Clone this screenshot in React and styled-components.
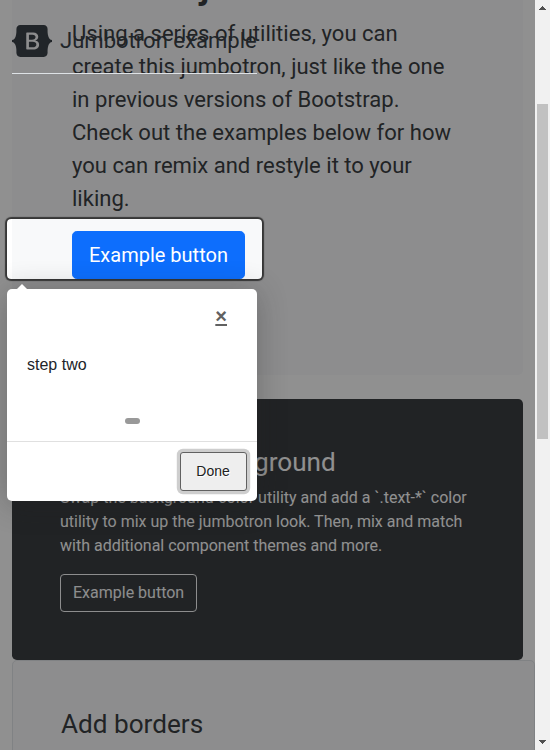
import React from "react";
import styled, { createGlobalStyle } from "styled-components";

const GlobalStyle = createGlobalStyle`
  *, *::before, *::after { box-sizing: border-box; }
  body {
    margin: 0;
    background: #fff;
    color: #212529;
    font: 400 16px/1.5 Roboto, sans-serif;
  }
  h1, h2, p { margin: 0; }
`;

const Window = styled.div`
  display: grid;
  grid-template-columns: 1fr 15px;
  width: 550px;
  height: 750px;
  overflow: hidden;
`;

const Page = styled.main`
  position: relative;
  overflow: hidden;
  height: 750px;
`;

const Sections = styled.div`
  display: flex;
  flex-direction: column;
  margin-top: -128.7px;
  padding-left: 12px;
`;

const Hero = styled.section`
  width: 511px;
  margin-bottom: 24px;
  padding: 96px 60px;
  border-radius: 4.8px;
  background: #f8f9fa;
`;

const HeroTitle = styled.h1`
  margin-bottom: 8px;
  font-size: 34.4px;
  font-weight: 700;
  line-height: 1.2;
`;

const Lead = styled.p`
  margin-bottom: 16px;
  font-size: 22.05px;
`;

const Button = styled.button`
  display: block;
  font-family: inherit;
  line-height: 1.5;
  padding: ${(p) => (p.$large ? "8px 16px" : "6px 12px")};
  font-size: ${(p) => (p.$large ? "20px" : "16px")};
  border-radius: ${(p) => (p.$large ? "4.8px" : "4px")};
  border: 1px solid ${(p) => (p.$large ? "#0d6efd" : "#f8f9fa")};
  background: ${(p) => (p.$large ? "#0d6efd" : "transparent")};
  color: ${(p) => (p.$large ? "#fff" : "#f8f9fa")};
`;

const Panel = styled.section`
  width: ${(p) => (p.$dark ? "511px" : "523px")};
  padding: 48px;
  border-radius: 4.8px;
  background: ${(p) => (p.$dark ? "#212529" : "#f8f9fa")};
  color: ${(p) => (p.$dark ? "#fff" : "inherit")};
  border: ${(p) => (p.$dark ? "0" : "1px solid #dee2e6")};
`;

const PanelTitle = styled.h2`
  margin-bottom: 8px;
  font-size: 26.15px;
  font-weight: 400;
  line-height: 1.2;
`;

const PanelText = styled.p`
  margin-bottom: 16px;
`;

const Highlight = styled.div`
  position: absolute;
  left: 7px;
  top: 219px;
  width: 255px;
  height: 60px;
  border-radius: 4px;
  box-shadow: 0 0 1px 2px rgba(33, 33, 33, 0.8), 0 0 0 5000px rgba(33, 33, 33, 0.5);
`;

const Header = styled.header`
  position: absolute;
  left: 12px;
  top: 25px;
  display: flex;
  align-items: center;
  width: 245px;
  height: 49px;
  padding-bottom: 16px;
  border-bottom: 1px solid #dee2e6;
  white-space: nowrap;
  font-size: 22.05px;
`;

const Logo = styled.svg`
  width: 40px;
  height: 32px;
  margin-right: 8px;
  flex: none;
`;

const Tooltip = styled.aside`
  position: absolute;
  left: 7px;
  top: 289px;
  display: flex;
  flex-direction: column;
  width: 250px;
  height: 212px;
  border-radius: 5px;
  background: #fff;
  box-shadow: 0 3px 30px rgba(33, 33, 33, 0.3);
  font-family: "Liberation Sans", sans-serif;

  &::before {
    content: "";
    position: absolute;
    left: 10px;
    top: -10px;
    border: 5px solid transparent;
    border-bottom-color: #fff;
  }
`;

const TooltipHeader = styled.div`
  display: flex;
  justify-content: flex-end;
  height: 45px;
  padding: 10px 20px 0 0;
`;

const Close = styled.a`
  padding: 7px 10px;
  color: #616161;
  font-size: 20px;
  font-weight: 700;
  line-height: 1;
  text-decoration: underline;
  cursor: pointer;
`;

const TooltipText = styled.div`
  height: 64px;
  padding: 19px 20px;
`;

const Bullets = styled.div`
  display: flex;
  justify-content: center;
  padding-top: 20px;
  height: 43px;
`;

const Bullet = styled.span`
  width: 15px;
  height: 6px;
  border-radius: 10px;
  background: #999;
`;

const TooltipFooter = styled.div`
  display: flex;
  justify-content: flex-end;
  align-items: flex-start;
  padding: 10px;
  border-top: 1px solid #e0e0e0;
`;

const DoneButton = styled.button`
  width: 67px;
  height: 39px;
  padding: 0 1px 2px 0;
  border: 1px solid #616161;
  border-radius: 3px;
  background: #eee;
  color: #212121;
  font: 14px "Liberation Sans", sans-serif;
  text-shadow: 1px 1px 0 #fff;
  box-shadow: 0 0 0 3.2px rgba(158, 158, 158, 0.5);
`;

const Scrollbar = styled.div`
  display: flex;
  flex-direction: column;
  align-items: center;
  background: #f1f1f1;
`;

const Arrow = styled.svg`
  width: 15px;
  height: 15px;
  flex: none;
  fill: #505050;
`;

const Track = styled.div`
  flex: 1;
  width: 11px;
  padding-top: 89px;
`;

const Thumb = styled.div`
  height: 335px;
  background: #c1c1c1;
`;

function BootstrapLogo() {
  return (
    <Logo viewBox="0 0 118 94" aria-label="Bootstrap">
      <path
        fillRule="evenodd"
        clipRule="evenodd"
        fill="#212529"
        d="M24.509 0c-6.733 0-11.715 5.893-11.492 12.284.214 6.14-.064 14.092-2.066 20.577C8.943 39.365 5.547 43.485 0 44.014v5.972c5.547.529 8.943 4.649 10.951 11.153 2.002 6.485 2.28 14.437 2.066 20.577C12.794 88.106 17.776 94 24.51 94H93.5c6.733 0 11.714-5.893 11.491-12.284-.214-6.14.064-14.092 2.066-20.577 2.009-6.504 5.396-10.624 10.943-11.153v-5.972c-5.547-.529-8.934-4.649-10.943-11.153-2.002-6.484-2.28-14.437-2.066-20.577C105.214 5.894 100.233 0 93.5 0H24.508zM80 57.863C80 66.663 73.436 72 62.543 72H44a2 2 0 01-2-2V24a2 2 0 012-2h18.437c9.083 0 15.044 4.92 15.044 12.474 0 5.302-4.01 10.049-9.119 10.88v.277C75.317 46.394 80 51.21 80 57.863zM60.521 28.34H49.948v14.934h8.905c6.884 0 10.68-2.772 10.68-7.727 0-4.643-3.264-7.207-9.012-7.207zM49.948 49.2v16.458H60.91c7.167 0 10.964-2.876 10.964-8.281 0-5.406-3.903-8.178-11.425-8.178H49.948z"
      />
    </Logo>
  );
}

export default function App() {
  return (
    <>
      <GlobalStyle />
      <Window>
        <Page>
          <Sections>
            <Hero>
              <HeroTitle>Custom jumbotron</HeroTitle>
              <Lead>
                Using a series of utilities, you can create this jumbotron, just like the one in
                previous versions of Bootstrap. Check out the examples below for how you can remix
                and restyle it to your liking.
              </Lead>
              <Button $large>Example button</Button>
            </Hero>
            <Panel $dark>
              <PanelTitle>Change the background</PanelTitle>
              <PanelText>
                Swap the background-color utility and add a `.text-*` color utility to mix up the
                jumbotron look. Then, mix and match with additional component themes and more.
              </PanelText>
              <Button>Example button</Button>
            </Panel>
            <Panel>
              <PanelTitle>Add borders</PanelTitle>
            </Panel>
          </Sections>
          <Highlight />
          <Header>
            <BootstrapLogo />
            <span>Jumbotron example</span>
          </Header>
          <Tooltip>
            <TooltipHeader>
              <Close>×</Close>
            </TooltipHeader>
            <TooltipText>step two</TooltipText>
            <Bullets>
              <Bullet />
            </Bullets>
            <TooltipFooter>
              <DoneButton>Done</DoneButton>
            </TooltipFooter>
          </Tooltip>
        </Page>
        <Scrollbar>
          <Arrow viewBox="0 0 15 15">
            <path d="M4 10h7v-1h-1V8H9V7H8V6H7v1H6v1H5v1H4z" />
          </Arrow>
          <Track>
            <Thumb />
          </Track>
          <Arrow viewBox="0 0 15 15">
            <path d="M4 5h7v1h-1v1H9v1H8v1H7V8H6V7H5V6H4z" />
          </Arrow>
        </Scrollbar>
      </Window>
    </>
  );
}
